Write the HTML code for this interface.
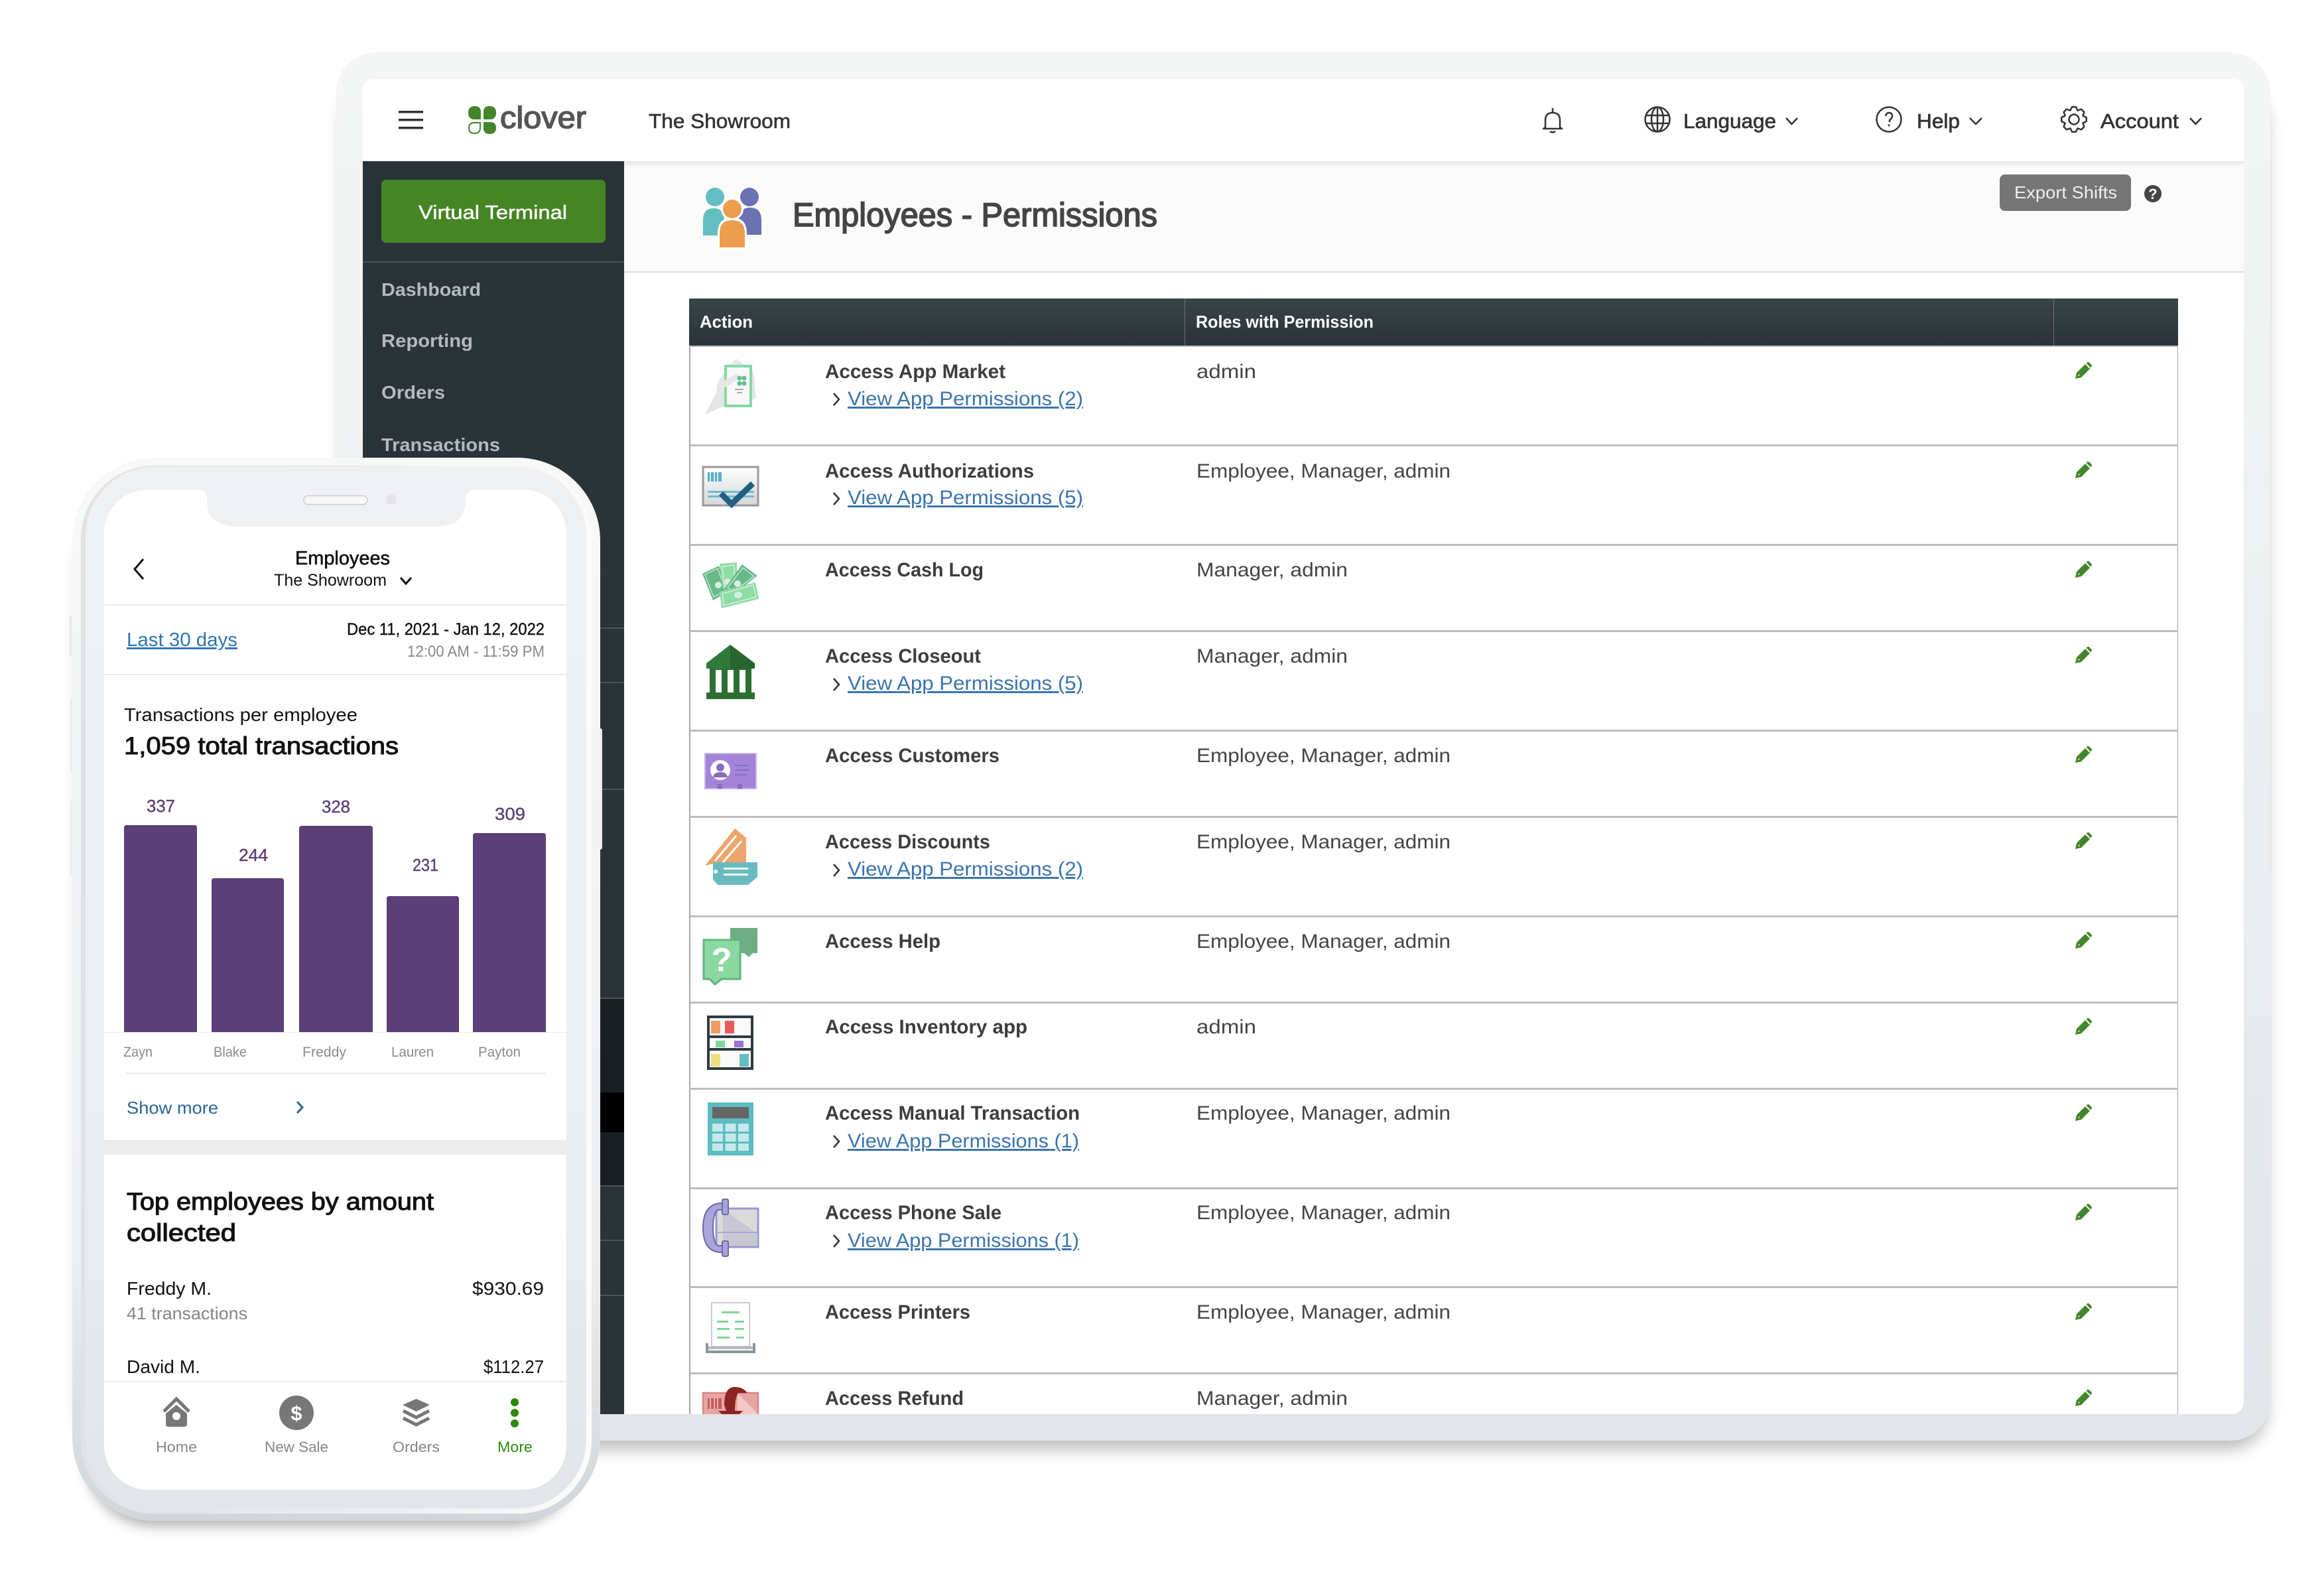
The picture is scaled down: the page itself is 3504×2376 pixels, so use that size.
<!DOCTYPE html>
<html lang="en">
<head>
<meta charset="utf-8">
<title>Employees - Permissions</title>
<style>
html,body{margin:0;padding:0;background:#fff;width:3504px;height:2376px;overflow:hidden}
svg{display:block}
text{font-family:"Liberation Sans",sans-serif;white-space:pre}
.side{font-size:28px;font-weight:700;fill:#b4babd}
.hd{font-size:31px;fill:#333;stroke:#333;stroke-width:.7}
.th{font-size:26px;font-weight:700;fill:#fff}
.t{font-size:30px;font-weight:700;fill:#3d3d3d}
.r{font-size:30px;fill:#444}
.l{font-size:30px;fill:#3b74ae;text-decoration:underline}
.p{font-size:28px;fill:#111}
.g{font-size:24px;fill:#888}
.v{font-size:26px;fill:#5c3f78}
.tab{font-size:22px;fill:#858585}
</style>
</head>
<body>
<svg xmlns="http://www.w3.org/2000/svg" width="3504" height="2376" viewBox="0 0 3504 2376">
<defs>
<linearGradient id="tab" x1="0" y1="0" x2="0" y2="1"><stop offset="0" stop-color="#f4f6f5"/><stop offset="1" stop-color="#e2e5e9"/></linearGradient>
<linearGradient id="phone" x1="0" y1="0" x2="0" y2="1"><stop offset="0" stop-color="#f7f8f8"/><stop offset=".75" stop-color="#eceef0"/><stop offset="1" stop-color="#d2d5d9"/></linearGradient>
<linearGradient id="stripe" x1="0" y1="0" x2="1" y2="0"><stop offset="0" stop-color="#e1e2e4"/><stop offset=".5" stop-color="#e9ebed"/><stop offset="1" stop-color="#fbfbfb"/></linearGradient>
<linearGradient id="bez" x1="0" y1="0" x2="0" y2="1"><stop offset="0" stop-color="#eff0f2"/><stop offset=".6" stop-color="#eceef1"/><stop offset="1" stop-color="#e2e5e9"/></linearGradient>
<linearGradient id="thg" x1="0" y1="0" x2="0" y2="1"><stop offset="0" stop-color="#3b4548"/><stop offset="1" stop-color="#2a3338"/></linearGradient>
<linearGradient id="hs" x1="0" y1="0" x2="0" y2="1"><stop offset="0" stop-color="#e6e6e6"/><stop offset="1" stop-color="#fbfbfb"/></linearGradient>
<linearGradient id="cardg" x1="0" y1="0" x2="0" y2="1"><stop offset="0" stop-color="#fff"/><stop offset="1" stop-color="#d3d6d8"/></linearGradient>
<filter id="b12" x="-10%" y="-10%" width="120%" height="120%"><feGaussianBlur stdDeviation="12"/></filter>
<filter id="b10" x="-20%" y="-20%" width="140%" height="140%"><feGaussianBlur stdDeviation="10"/></filter>
<clipPath id="scr"><rect x="547" y="119" width="2836" height="2013" rx="18"/></clipPath>
<symbol id="pen" viewBox="0 0 25 25" width="25" height="25" overflow="visible">
<path d="M0 25 L2 16 L15 3 L22 10 L9 23 Z" fill="#43862a"/>
<path d="M16.5 1.5 L18.5 0 Q20 -.5 21.5 1 L24 3.5 Q25.500 5 24.500 6.500 L23.200 8.500 Z" fill="#43862a"/>
<path d="M4 21 L5.500 18 L7 19.500 Z" fill="#fff"/>
</symbol>
</defs>

<rect width="3504" height="2376" fill="#fff"/>

<!-- tablet -->
<rect x="515" y="130" width="2904" height="2056" rx="60" fill="#000" opacity=".25" filter="url(#b12)"/>
<rect x="507" y="79" width="2916" height="2093" rx="60" fill="url(#tab)"/>

<g clip-path="url(#scr)">
<rect x="547" y="119" width="2836" height="2013" fill="#fff"/>
<rect x="941" y="243" width="2442" height="167" fill="#fbfbfb"/>
<rect x="941" y="243" width="2442" height="10" fill="url(#hs)"/>
<rect x="941" y="409" width="2442" height="2" fill="#dcdcdc"/>

<!-- sidebar -->
<rect x="547" y="243" width="394" height="1889" fill="#2a3338"/>
<rect x="547" y="394" width="394" height="2" fill="#485156"/>
<rect x="575" y="271" width="338" height="95" rx="7" fill="#458524"/>
<text x="631" y="330" font-size="29" font-weight="400" fill="#fff" stroke="#fff" stroke-width=".5" textLength="224" lengthAdjust="spacingAndGlyphs">Virtual Terminal</text>
<text class="side" x="575" y="446" textLength="150" lengthAdjust="spacingAndGlyphs">Dashboard</text>
<text class="side" x="575" y="523" textLength="138" lengthAdjust="spacingAndGlyphs">Reporting</text>
<text class="side" x="575" y="601" textLength="96" lengthAdjust="spacingAndGlyphs">Orders</text>
<text class="side" x="575" y="680" textLength="179" lengthAdjust="spacingAndGlyphs">Transactions</text>
<rect x="547" y="946" width="394" height="2" fill="#4a5358"/>
<rect x="547" y="1028" width="394" height="2" fill="#4a5358"/>
<rect x="547" y="1189" width="394" height="2" fill="#4a5358"/>
<rect x="547" y="1504" width="394" height="283" fill="#1a1f22"/>
<rect x="547" y="1504" width="394" height="2" fill="#4a5358"/>
<rect x="547" y="1647" width="394" height="60" fill="#000"/>
<rect x="547" y="1787" width="394" height="2" fill="#4a5358"/>
<rect x="547" y="1869" width="394" height="2" fill="#4a5358"/>
<rect x="547" y="1952" width="394" height="2" fill="#4a5358"/>

<!-- page title icon -->
<circle cx="1078" cy="297" r="14" fill="#62bec0"/>
<path d="M1060 355 V332 Q1060 314 1076 314 Q1092 314 1092 332 V355 Z" fill="#62bec0"/>
<circle cx="1130" cy="297" r="14" fill="#6a72b3"/>
<path d="M1114 354 V332 Q1114 313 1131 313 Q1148 313 1148 332 V354 Z" fill="#6a72b3"/>
<path d="M1082 376 V352 Q1082 328 1104 328 Q1126 328 1126 352 V376 Z" fill="#fff"/>
<circle cx="1104" cy="315" r="17" fill="#fff"/>
<circle cx="1104" cy="315" r="14" fill="#ed9d4e"/>
<path d="M1085 373 V352 Q1085 332 1104 332 Q1123 332 1123 352 V373 Z" fill="#ed9d4e"/>
<text x="1195" y="341" font-size="50" fill="#444" stroke="#444" stroke-width="1.700" textLength="550" lengthAdjust="spacingAndGlyphs">Employees - Permissions</text>

<rect x="3015" y="263" width="198" height="55" rx="8" fill="#757575"/>
<text x="3037" y="299" font-size="26" fill="#eee" textLength="155" lengthAdjust="spacingAndGlyphs">Export Shifts</text>
<circle cx="3246" cy="292" r="13" fill="#444"/>
<text x="3246" y="300" font-size="22" font-weight="700" fill="#fff" text-anchor="middle">?</text>

<!-- table -->
<rect x="1039" y="450" width="2245" height="71" fill="url(#thg)"/>
<rect x="1786" y="450" width="1" height="71" fill="#6b7275"/>
<rect x="3096" y="450" width="1" height="71" fill="#6b7275"/>
<text class="th" x="1055" y="494" textLength="80" lengthAdjust="spacingAndGlyphs">Action</text>
<text class="th" x="1803" y="494" textLength="268" lengthAdjust="spacingAndGlyphs">Roles with Permission</text>
<rect x="1039" y="521" width="2" height="1620" fill="#a5a5a5"/>
<rect x="3283" y="521" width="1" height="1620" fill="#a5a5a5"/>
<rect x="1039" y="521" width="2245" height="2" fill="#bdbdbd"/>
<g fill="#bdbdbd">
<rect x="1040" y="670" width="2244" height="3"/>
<rect x="1040" y="820" width="2244" height="3"/>
<rect x="1040" y="950" width="2244" height="3"/>
<rect x="1040" y="1100" width="2244" height="3"/>
<rect x="1040" y="1230" width="2244" height="3"/>
<rect x="1040" y="1380" width="2244" height="3"/>
<rect x="1040" y="1510" width="2244" height="3"/>
<rect x="1040" y="1640" width="2244" height="3"/>
<rect x="1040" y="1790" width="2244" height="3"/>
<rect x="1040" y="1939" width="2244" height="3"/>
<rect x="1040" y="2069" width="2244" height="3"/>
</g>

<!-- titles -->
<text class="t" x="1244" y="570" textLength="272" lengthAdjust="spacingAndGlyphs">Access App Market</text>
<text class="t" x="1244" y="720" textLength="315" lengthAdjust="spacingAndGlyphs">Access Authorizations</text>
<text class="t" x="1244" y="869" textLength="239" lengthAdjust="spacingAndGlyphs">Access Cash Log</text>
<text class="t" x="1244" y="999" textLength="235" lengthAdjust="spacingAndGlyphs">Access Closeout</text>
<text class="t" x="1244" y="1149" textLength="263" lengthAdjust="spacingAndGlyphs">Access Customers</text>
<text class="t" x="1244" y="1279" textLength="249" lengthAdjust="spacingAndGlyphs">Access Discounts</text>
<text class="t" x="1244" y="1429" textLength="174" lengthAdjust="spacingAndGlyphs">Access Help</text>
<text class="t" x="1244" y="1558" textLength="305" lengthAdjust="spacingAndGlyphs">Access Inventory app</text>
<text class="t" x="1244" y="1688" textLength="384" lengthAdjust="spacingAndGlyphs">Access Manual Transaction</text>
<text class="t" x="1244" y="1838" textLength="266" lengthAdjust="spacingAndGlyphs">Access Phone Sale</text>
<text class="t" x="1244" y="1988" textLength="219" lengthAdjust="spacingAndGlyphs">Access Printers</text>
<text class="t" x="1244" y="2118" textLength="209" lengthAdjust="spacingAndGlyphs">Access Refund</text>

<!-- roles -->
<text class="r" x="1804" y="570" textLength="90" lengthAdjust="spacingAndGlyphs">admin</text>
<text class="r" x="1804" y="720" textLength="383" lengthAdjust="spacingAndGlyphs">Employee, Manager, admin</text>
<text class="r" x="1804" y="869" textLength="228" lengthAdjust="spacingAndGlyphs">Manager, admin</text>
<text class="r" x="1804" y="999" textLength="228" lengthAdjust="spacingAndGlyphs">Manager, admin</text>
<text class="r" x="1804" y="1149" textLength="383" lengthAdjust="spacingAndGlyphs">Employee, Manager, admin</text>
<text class="r" x="1804" y="1279" textLength="383" lengthAdjust="spacingAndGlyphs">Employee, Manager, admin</text>
<text class="r" x="1804" y="1429" textLength="383" lengthAdjust="spacingAndGlyphs">Employee, Manager, admin</text>
<text class="r" x="1804" y="1558" textLength="90" lengthAdjust="spacingAndGlyphs">admin</text>
<text class="r" x="1804" y="1688" textLength="383" lengthAdjust="spacingAndGlyphs">Employee, Manager, admin</text>
<text class="r" x="1804" y="1838" textLength="383" lengthAdjust="spacingAndGlyphs">Employee, Manager, admin</text>
<text class="r" x="1804" y="1988" textLength="383" lengthAdjust="spacingAndGlyphs">Employee, Manager, admin</text>
<text class="r" x="1804" y="2118" textLength="228" lengthAdjust="spacingAndGlyphs">Manager, admin</text>

<!-- links -->
<text class="l" x="1278" y="611" textLength="355" lengthAdjust="spacingAndGlyphs">View App Permissions (2)</text>
<text class="l" x="1278" y="760" textLength="355" lengthAdjust="spacingAndGlyphs">View App Permissions (5)</text>
<text class="l" x="1278" y="1040" textLength="355" lengthAdjust="spacingAndGlyphs">View App Permissions (5)</text>
<text class="l" x="1278" y="1320" textLength="355" lengthAdjust="spacingAndGlyphs">View App Permissions (2)</text>
<text class="l" x="1278" y="1730" textLength="349" lengthAdjust="spacingAndGlyphs">View App Permissions (1)</text>
<text class="l" x="1278" y="1880" textLength="349" lengthAdjust="spacingAndGlyphs">View App Permissions (1)</text>
<g fill="none" stroke="#333" stroke-width="2.5">
<path d="M1257 593 L1265 602 L1257 611"/>
<path d="M1257 743 L1265 752 L1257 761"/>
<path d="M1257 1023 L1265 1032 L1257 1041"/>
<path d="M1257 1303 L1265 1312 L1257 1321"/>
<path d="M1257 1712 L1265 1721 L1257 1730"/>
<path d="M1257 1862 L1265 1871 L1257 1880"/>
</g>

<!-- pencils -->
<use href="#pen" x="3129" y="546"/>
<use href="#pen" x="3129" y="696"/>
<use href="#pen" x="3129" y="846"/>
<use href="#pen" x="3129" y="975"/>
<use href="#pen" x="3129" y="1125"/>
<use href="#pen" x="3129" y="1255"/>
<use href="#pen" x="3129" y="1405"/>
<use href="#pen" x="3129" y="1535"/>
<use href="#pen" x="3129" y="1665"/>
<use href="#pen" x="3129" y="1815"/>
<use href="#pen" x="3129" y="1965"/>
<use href="#pen" x="3129" y="2095"/>

<!-- row icons -->
<!-- 1 app market -->
<path d="M1063 625 L1080 592 L1082 576 L1100 551 L1110 541 L1136 560 L1140 600 L1120 612 L1092 612 Z" fill="#e4e6e7"/>
<rect x="1094" y="552" width="38" height="60" fill="#f8f8f8" stroke="#85daa3" stroke-width="4"/>
<path d="M1084 578 L1112 563 L1116 570 L1090 586 Z" fill="#e4e6e7"/>
<g fill="#5fc08a"><circle cx="1115" cy="570" r="3.500"/><circle cx="1122" cy="570" r="3.500"/><circle cx="1115" cy="578" r="3.500"/><circle cx="1122" cy="578" r="3.500"/></g>
<rect x="1108" y="586" width="13" height="2" fill="#aaa"/><rect x="1111" y="591" width="8" height="2" fill="#aaa"/>
<!-- 2 authorizations -->
<rect x="1060" y="704" width="83" height="58" fill="url(#cardg)" stroke="#9a9a9a" stroke-width="3"/>
<rect x="1067" y="712" width="21" height="14" fill="#5aaecb"/>
<path d="M1071 712 V726 M1077 712 V726 M1082 712 V726" stroke="#fff" stroke-width="1.500"/>
<rect x="1067" y="740" width="70" height="3" fill="#6ebbd3"/><rect x="1067" y="747" width="70" height="3" fill="#6ebbd3"/>
<path d="M1087 744 L1103 760 L1135 729" fill="none" stroke="#23607f" stroke-width="9"/>
<!-- 3 cash -->
<polygon points="1059,865 1084,853 1098,892 1075,905" fill="#6bb98a"/>
<polygon points="1063,866 1082,857 1094,890 1076,900" fill="none" stroke="#cfeeda" stroke-width="1.200"/>
<circle cx="1083" cy="882" r="5" fill="#d5f0de"/>
<polygon points="1085,850 1111,848 1111,887 1090,888" fill="#8fdca6"/>
<polygon points="1089,854 1107,852 1107,884 1092,884" fill="none" stroke="#dff7e7" stroke-width="1.200"/>
<circle cx="1097" cy="877" r="5" fill="#d5f0de"/>
<polygon points="1119,851 1142,868 1107,895 1092,888" fill="#6bb98a"/>
<polygon points="1120,856 1137,869 1107,891 1097,886" fill="none" stroke="#cfeeda" stroke-width="1.200"/>
<circle cx="1112" cy="880" r="5" fill="#d5f0de"/>
<polygon points="1085,892 1139,878 1144,903 1088,917" fill="#8fdca6"/>
<polygon points="1089,895 1136,882 1140,900 1091,913" fill="none" stroke="#dff7e7" stroke-width="1.200"/>
<ellipse cx="1113" cy="897" rx="6" ry="5" fill="#d5f0de"/>
<!-- 4 bank -->
<path d="M1101 972 L1138 1000 V1008 H1065 V1000 Z" fill="#2f7a38"/>
<path d="M1101 972 L1138 1000 V1008 H1101 Z" fill="#2a6430"/>
<rect x="1070" y="1008" width="63" height="38" fill="#2d6e35"/>
<rect x="1065" y="1044" width="73" height="10" fill="#2d6e35"/>
<rect x="1079" y="1010" width="9" height="34" fill="#fff"/><rect x="1097" y="1010" width="9" height="34" fill="#fff"/><rect x="1115" y="1010" width="9" height="34" fill="#fff"/>
<!-- 5 customers -->
<rect x="1063" y="1136" width="77" height="53" fill="#a484d8" stroke="#c8b5e8" stroke-width="2"/>
<circle cx="1086" cy="1161" r="15" fill="#fff"/>
<circle cx="1086" cy="1157" r="6" fill="#8a6cc0"/><path d="M1075 1172 Q1076 1164 1086 1164 Q1096 1164 1097 1172 Z" fill="#8a6cc0"/>
<g fill="#8a6cc0"><rect x="1108" y="1153" width="20" height="2"/><rect x="1108" y="1160" width="22" height="2"/><rect x="1108" y="1167" width="18" height="2"/><rect x="1082" y="1182" width="7" height="7"/><rect x="1112" y="1182" width="7" height="7"/></g>
<!-- 6 discounts -->
<path d="M1063 1305 L1108 1249 L1125 1263 V1300 H1085 Z" fill="#eea56b"/>
<path d="M1078 1298 L1110 1260 M1090 1300 L1118 1268" stroke="#fff" stroke-width="3" fill="none"/>
<path d="M1075 1300 H1142 V1322 L1128 1334 H1082 L1075 1326 Z" fill="#68bcc0"/>
<rect x="1091" y="1308" width="37" height="3" fill="#fff"/><rect x="1091" y="1317" width="37" height="3" fill="#fff"/>
<circle cx="1079" cy="1314" r="3" fill="#fff"/>
<!-- 7 help -->
<path d="M1101 1399 H1142 V1437 H1135 L1129 1443 L1122 1437 H1101 Z" fill="#6fae85"/>
<path d="M1061 1417 H1116 V1476 H1088 L1078 1484 L1070 1476 H1061 Z" fill="#8bd9a0" stroke="#5fb57f" stroke-width="3"/>
<text x="1088" y="1464" font-size="50" font-weight="700" fill="#fff" text-anchor="middle">?</text>
<!-- 8 inventory -->
<rect x="1068" y="1533" width="66" height="78" fill="#fafafa" stroke="#2f3b40" stroke-width="4"/>
<rect x="1068" y="1561" width="66" height="4" fill="#2f3b40"/><rect x="1068" y="1580" width="66" height="4" fill="#2f3b40"/>
<rect x="1072" y="1539" width="14" height="19" fill="#ef9d60"/><rect x="1093" y="1539" width="14" height="19" fill="#ea5a5a"/>
<rect x="1079" y="1569" width="14" height="10" fill="#7fd69a"/><rect x="1107" y="1569" width="14" height="10" fill="#9b70d2"/>
<rect x="1072" y="1589" width="14" height="19" fill="#ece07e"/><rect x="1115" y="1589" width="14" height="19" fill="#63bfc5"/>
<!-- 9 calc -->
<rect x="1067" y="1662" width="69" height="80" fill="#5cbcc0"/>
<rect x="1074" y="1669" width="55" height="17" fill="#666"/>
<g fill="#c5e8ea">
<rect x="1074" y="1694" width="16" height="12"/><rect x="1093.500" y="1694" width="16" height="12"/><rect x="1113" y="1694" width="16" height="12"/>
<rect x="1074" y="1709" width="16" height="12"/><rect x="1093.500" y="1709" width="16" height="12"/><rect x="1113" y="1709" width="16" height="12"/>
<rect x="1074" y="1724" width="16" height="11"/><rect x="1093.500" y="1724" width="16" height="11"/><rect x="1113" y="1724" width="16" height="11"/>
</g>
<!-- 10 phone sale -->
<rect x="1080" y="1822" width="63" height="58" fill="#dadada" stroke="#9a97cf" stroke-width="3"/>
<path d="M1090 1822 L1142 1860 V1878 H1090 Z" fill="#c9c8d2"/>
<rect x="1082" y="1857" width="60" height="2" fill="#a9a5db"/>
<path d="M1090 1814 H1084 Q1060 1818 1060 1851 Q1060 1885 1084 1888 H1090 V1878 H1082 Q1075 1872 1075 1851 Q1075 1830 1082 1824 H1090 Z" fill="#a9a5db" stroke="#6d69a8" stroke-width="2"/>
<rect x="1089" y="1808" width="9" height="23" rx="2" fill="#a9a5db" stroke="#6d69a8" stroke-width="2"/>
<rect x="1089" y="1871" width="9" height="23" rx="2" fill="#a9a5db" stroke="#6d69a8" stroke-width="2"/>
<!-- 11 printers -->
<rect x="1073" y="1964" width="57" height="66" fill="#fff" stroke="#ccc" stroke-width="2"/>
<g fill="#7fd69a"><rect x="1088" y="1977" width="27" height="3"/><rect x="1081" y="1991" width="17" height="3"/><rect x="1108" y="1991" width="14" height="3"/><rect x="1081" y="2002" width="19" height="3"/><rect x="1108" y="2002" width="14" height="3"/><rect x="1081" y="2015" width="19" height="3"/><rect x="1110" y="2015" width="12" height="3"/></g>
<path d="M1066 2025 V2038 H1137 V2025" fill="none" stroke="#8a9598" stroke-width="4"/>
<rect x="1068" y="2030" width="67" height="4" fill="#b4bbbd"/>
<!-- 12 refund -->
<rect x="1060" y="2100" width="83" height="50" fill="#e8a4a4" stroke="#d98585" stroke-width="2.500"/>
<rect x="1067" y="2108" width="21" height="16" fill="#c75a5a"/>
<path d="M1071 2108 V2124 M1077 2108 V2124 M1082 2108 V2124" stroke="#f5d0d0" stroke-width="1.500"/>
<path d="M1112 2100 L1143 2132 H1112 Z" fill="#f3c8c8"/>
<path d="M1092 2118 Q1092 2091 1108 2091 Q1120 2091 1127 2100 L1113 2100 Q1108 2108 1108 2127 L1120 2127 L1102 2145 L1083 2127 L1095 2127 Z" fill="#8c2424"/>
</g>

<!-- top header -->
<path d="M565 119 H3365 Q3383 119 3383 137 V243 H547 V137 Q547 119 565 119 Z" fill="#fff"/>
<g fill="#333"><rect x="601" y="167" width="37" height="3.500"/><rect x="601" y="179" width="37" height="3.500"/><rect x="601" y="191" width="37" height="3.500"/></g>

<!-- clover logo -->
<path d="M725 180 H715 Q706 180 706 170 Q706 160 716 160 Q725 160 725 169 Z" fill="#43862a"/>
<path d="M729 180 H739 Q748 180 748 170 Q748 160 738 160 Q729 160 729 169 Z" fill="#43862a"/>
<path d="M729 184 H739 Q748 184 748 193 Q748 202 738 202 Q729 202 729 193 Z" fill="#43862a"/>
<path d="M724 185 H715 Q707 185 707 193 Q707 201 715 201 Q724 201 724 193 Z" fill="none" stroke="#43862a" stroke-width="2"/>
<text x="754" y="193" font-size="46" fill="#555" stroke="#555" stroke-width="1.500" textLength="130" lengthAdjust="spacingAndGlyphs">clover</text>

<text x="978" y="193" font-size="31" fill="#333" stroke="#333" stroke-width=".6" textLength="214" lengthAdjust="spacingAndGlyphs">The Showroom</text>

<!-- bell -->
<g fill="none" stroke="#333" stroke-width="2.500" stroke-linejoin="round">
<path d="M2341 163 V170"/>
<path d="M2330 192 V181 Q2330 170 2341 170 Q2352 170 2352 181 V192 L2355 194 H2327 Z"/>
<path d="M2337 198 Q2341 201 2345 198"/>
<!-- globe -->
<circle cx="2499" cy="180" r="18.500"/>
<ellipse cx="2499" cy="180" rx="9" ry="18.500"/>
<path d="M2499 161.500 V198.500 M2481 174 H2517 M2481 186 H2517"/>
<path d="M2693 178 L2701.500 187 L2710 178"/>
<!-- help -->
<circle cx="2848" cy="180" r="18.500"/>
<path d="M2843 175 Q2844 170 2848 170 Q2853 170 2853 175 Q2853 178 2849 181 V184"/>
<path d="M2970 178 L2979 187 L2988 178"/>
<!-- gear -->
<g transform="translate(3127 180)">
<path d="M18.770 -2.970 L18.770 2.970 L13.400 5.550 L15.370 11.170 L11.170 15.370 L5.550 13.400 L2.970 18.770 L-2.970 18.770 L-5.550 13.400 L-11.170 15.370 L-15.370 11.170 L-13.400 5.550 L-18.770 2.970 L-18.770 -2.970 L-13.400 -5.550 L-15.370 -11.170 L-11.170 -15.370 L-5.550 -13.400 L-2.970 -18.770 L2.970 -18.770 L5.550 -13.400 L11.170 -15.370 L15.370 -11.170 L13.400 -5.550 Z"/>
<circle r="7.500"/>
</g>
<path d="M3302 178 L3310.500 187 L3319 178"/>
</g>
<circle cx="2848" cy="189" r="1.500" fill="#333"/>
<text class="hd" x="2538" y="193" textLength="140" lengthAdjust="spacingAndGlyphs">Language</text>
<text class="hd" x="2890" y="193" textLength="65" lengthAdjust="spacingAndGlyphs">Help</text>
<text class="hd" x="3167" y="193" textLength="118" lengthAdjust="spacingAndGlyphs">Account</text>

<!-- phone -->
<rect x="106" y="820" width="40" height="1340" rx="20" fill="#000" opacity=".05" filter="url(#b10)"/>
<rect x="130" y="2050" width="740" height="250" rx="100" fill="#000" opacity=".32" filter="url(#b10)"/>
<g fill="#e9ebee"><rect x="104" y="929" width="8" height="60" rx="3"/><rect x="106" y="1052" width="7" height="114" rx="3"/><rect x="106" y="1206" width="7" height="113" rx="3"/><rect x="899" y="1098" width="9" height="183" rx="3"/></g>
<rect x="109" y="690" width="796" height="1603" rx="125" fill="url(#phone)"/>
<rect x="122" y="702" width="770" height="1580" rx="110" fill="url(#stripe)"/>
<rect x="129" y="704" width="755" height="1570" rx="104" fill="url(#bez)"/>
<rect x="157" y="738" width="697" height="1508" rx="66" fill="#fff"/>
<path d="M296 737 Q312 738 312 754 Q312 794 358 794 H656 Q702 794 702 754 Q702 738 718 737 Z" fill="#eff0f2"/>
<rect x="458" y="747.500" width="96" height="13" rx="6.500" fill="#f7f7f7" stroke="#c9cbce" stroke-width="1.500"/>
<circle cx="590" cy="753" r="8" fill="#e4e4e6"/>

<!-- phone header -->
<path d="M216 843 L203 858 L216 873" fill="none" stroke="#111" stroke-width="3"/>
<text x="445" y="851" font-size="29" fill="#111" stroke="#111" stroke-width=".6" textLength="143" lengthAdjust="spacingAndGlyphs">Employees</text>
<text x="413" y="883" font-size="25" fill="#111" textLength="170" lengthAdjust="spacingAndGlyphs">The Showroom</text>
<path d="M604 871 L612 880 L620 871" fill="none" stroke="#111" stroke-width="3"/>
<rect x="157" y="911" width="697" height="2" fill="#e9e9e9"/>
<text x="191" y="974" font-size="29" fill="#2e75b5" text-decoration="underline" textLength="167" lengthAdjust="spacingAndGlyphs">Last 30 days</text>
<text x="523" y="957" font-size="25" fill="#111" stroke="#111" stroke-width=".4" textLength="298" lengthAdjust="spacingAndGlyphs">Dec 11, 2021 - Jan 12, 2022</text>
<text class="g" x="614" y="990" textLength="207" lengthAdjust="spacingAndGlyphs">12:00 AM - 11:59 PM</text>
<rect x="157" y="1016" width="697" height="2" fill="#e9e9e9"/>
<text x="187" y="1087" font-size="28" fill="#111" textLength="352" lengthAdjust="spacingAndGlyphs">Transactions per employee</text>
<text x="187" y="1137" font-size="37" fill="#111" stroke="#111" stroke-width="1" textLength="414" lengthAdjust="spacingAndGlyphs">1,059 total transactions</text>

<!-- bars -->
<g fill="#5c3f78">
<path d="M187 1556 V1248 Q187 1244 191 1244 H293 Q297 1244 297 1248 V1556 Z"/>
<path d="M319 1556 V1328 Q319 1324 323 1324 H424 Q428 1324 428 1328 V1556 Z"/>
<path d="M451 1556 V1249 Q451 1245 455 1245 H558 Q562 1245 562 1249 V1556 Z"/>
<path d="M583 1556 V1355 Q583 1351 587 1351 H688 Q692 1351 692 1355 V1556 Z"/>
<path d="M713 1556 V1260 Q713 1256 717 1256 H819 Q823 1256 823 1260 V1556 Z"/>
</g>
<text class="v" x="221" y="1224" stroke="#5c3f78" stroke-width=".4" textLength="43" lengthAdjust="spacingAndGlyphs">337</text>
<text class="v" x="360" y="1298" stroke="#5c3f78" stroke-width=".4" textLength="44" lengthAdjust="spacingAndGlyphs">244</text>
<text class="v" x="485" y="1225" stroke="#5c3f78" stroke-width=".4" textLength="43" lengthAdjust="spacingAndGlyphs">328</text>
<text class="v" x="622" y="1313" stroke="#5c3f78" stroke-width=".4" textLength="39" lengthAdjust="spacingAndGlyphs">231</text>
<text class="v" x="746" y="1236" stroke="#5c3f78" stroke-width=".4" textLength="46" lengthAdjust="spacingAndGlyphs">309</text>
<rect x="157" y="1556" width="697" height="1" fill="#ececec"/>
<g font-size="21" fill="#8a8a8a">
<text x="186" y="1593" textLength="44" lengthAdjust="spacingAndGlyphs">Zayn</text>
<text x="322" y="1593" textLength="50" lengthAdjust="spacingAndGlyphs">Blake</text>
<text x="456" y="1593" textLength="66" lengthAdjust="spacingAndGlyphs">Freddy</text>
<text x="590" y="1593" textLength="64" lengthAdjust="spacingAndGlyphs">Lauren</text>
<text x="721" y="1593" textLength="64" lengthAdjust="spacingAndGlyphs">Payton</text>
</g>
<rect x="190" y="1617" width="632" height="2" fill="#e9e9e9"/>
<text x="191" y="1679" font-size="26" fill="#2a6595" textLength="138" lengthAdjust="spacingAndGlyphs">Show more</text>
<path d="M448 1661 L456 1669.500 L448 1678" fill="none" stroke="#2a6595" stroke-width="3"/>
<rect x="157" y="1719" width="697" height="22" fill="#ebebeb"/>
<text x="191" y="1824" font-size="37" fill="#111" stroke="#111" stroke-width="1.100" textLength="463" lengthAdjust="spacingAndGlyphs">Top employees by amount</text>
<text x="191" y="1871" font-size="37" fill="#111" stroke="#111" stroke-width="1.100" textLength="165" lengthAdjust="spacingAndGlyphs">collected</text>
<text class="p" x="191" y="1952" textLength="128" lengthAdjust="spacingAndGlyphs">Freddy M.</text>
<text class="p" x="712" y="1952" textLength="108" lengthAdjust="spacingAndGlyphs">$930.69</text>
<text x="191" y="1989" font-size="26" fill="#858585" textLength="182" lengthAdjust="spacingAndGlyphs">41 transactions</text>
<text class="p" x="191" y="2070" textLength="111" lengthAdjust="spacingAndGlyphs">David M.</text>
<text class="p" x="729" y="2070" textLength="91" lengthAdjust="spacingAndGlyphs">$112.27</text>

<!-- tab bar -->
<rect x="157" y="2082" width="697" height="82" fill="#fff"/>
<rect x="157" y="2082" width="697" height="2" fill="#ebebeb"/>
<path d="M247 2128 L266 2109 L285 2128" fill="none" stroke="#777" stroke-width="5"/>
<path d="M250 2131 L266 2118 L282 2131 V2147 Q282 2151 278 2151 H254 Q250 2151 250 2147 Z" fill="#777"/>
<circle cx="266" cy="2135" r="6" fill="#fff"/>
<circle cx="447" cy="2130" r="26" fill="#777"/>
<text x="447" y="2141" font-size="31" font-weight="700" fill="#fff" text-anchor="middle">$</text>
<path d="M607 2118 L627.500 2109 L648 2118 L627.500 2128 Z" fill="#777"/>
<path d="M608 2127 L627.500 2137 L647 2127 M608 2138 L627.500 2148 L647 2138" fill="none" stroke="#777" stroke-width="5"/>
<g fill="#2a8a0a"><circle cx="776" cy="2114" r="6"/><circle cx="776" cy="2130" r="6"/><circle cx="776" cy="2146" r="6"/></g>
<text class="tab" x="235" y="2189" textLength="62" lengthAdjust="spacingAndGlyphs">Home</text>
<text class="tab" x="399" y="2189" textLength="96" lengthAdjust="spacingAndGlyphs">New Sale</text>
<text class="tab" x="592" y="2189" textLength="71" lengthAdjust="spacingAndGlyphs">Orders</text>
<text class="tab" x="750" y="2189" style="fill:#2a8a0a" textLength="53" lengthAdjust="spacingAndGlyphs">More</text>
</svg>
</body>
</html>
